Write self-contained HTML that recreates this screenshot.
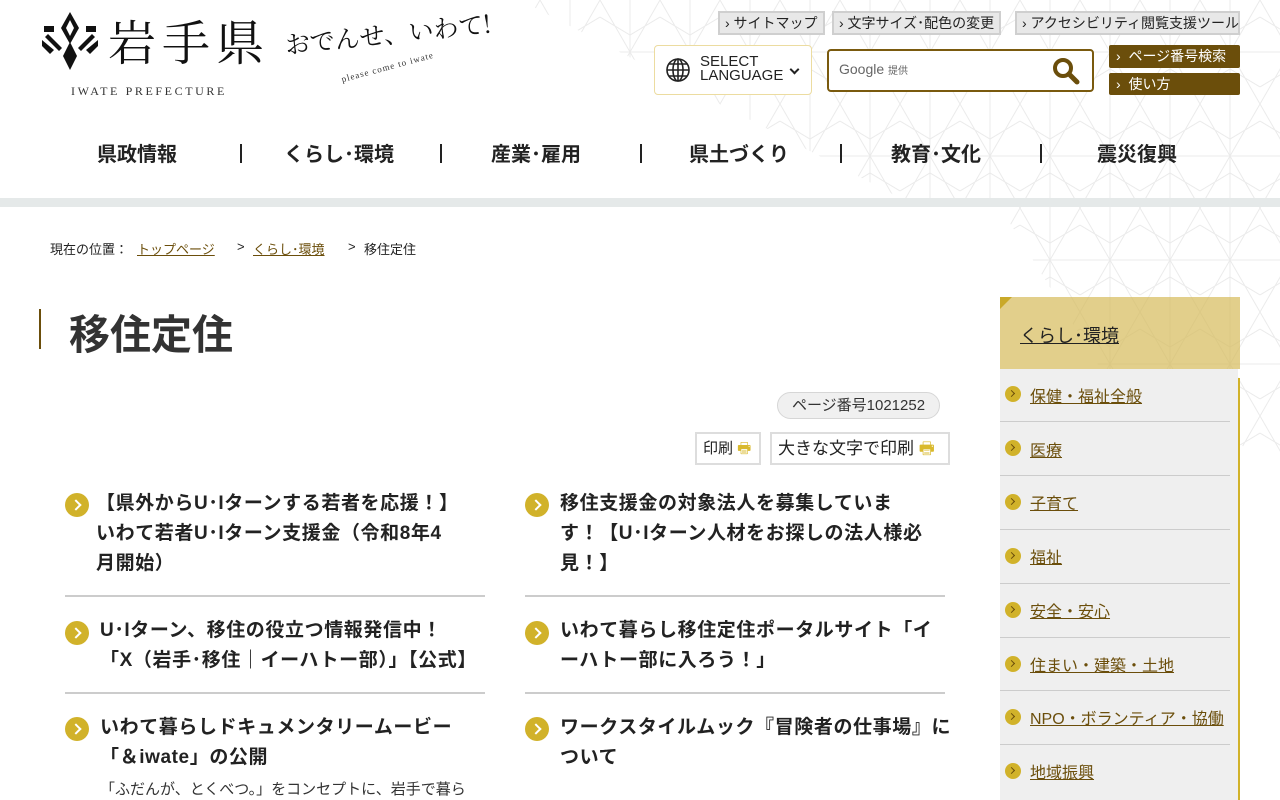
<!DOCTYPE html>
<html lang="ja"><head><meta charset="utf-8"><style>
*{margin:0;padding:0;box-sizing:border-box}
body{width:1280px;height:800px;overflow:hidden;background:#fff;font-family:"Liberation Sans","Noto Sans CJK JP",sans-serif;color:#222;position:relative}
.abs{position:absolute}
.tl{position:absolute;top:11px;height:24px;background:#e8e8e8;border:2px solid #cfcfcf;font-size:14px;line-height:20px;padding:0 5px;color:#222;white-space:nowrap}
.nav{position:absolute;top:138px;font-size:20px;font-weight:bold;color:#222}
.sep{position:absolute;top:144px;width:2px;height:19px;background:#222}
.item{position:absolute;font-size:19px;font-weight:bold;line-height:30px;color:#222;white-space:nowrap;letter-spacing:.6px}
.ic{position:absolute;width:24px;height:24px;border-radius:50%;background:#d1b22a}
.ic::after{content:"";position:absolute;left:7px;top:8px;width:6px;height:6px;border-right:2px solid #fff;border-top:2px solid #fff;transform:rotate(45deg)}
.hr{position:absolute;height:2px;background:#ccc}
.side{position:absolute;left:1000px;width:230px;font-size:16px;color:#6b4e0b;text-decoration:underline}
.sic{position:absolute;left:1005px;width:16px;height:16px;border-radius:50%;background:#d1b22a}
.sic::after{content:"";position:absolute;left:4px;top:5px;width:4px;height:4px;border-right:1.5px solid #6b4e0b;border-top:1.5px solid #6b4e0b;transform:rotate(45deg)}
.shr{position:absolute;left:1000px;width:230px;height:1px;background:#ccc}
.bc{position:absolute;top:239px;font-size:13px;color:#222;white-space:nowrap}
.bc a{color:#6b4e0b;text-decoration:underline}
</style></head><body>
<svg class="abs" style="left:0;top:0" width="1280" height="800"><defs><pattern id="p" width="60" height="104" patternUnits="userSpaceOnUse"><g stroke="#ebebeb" stroke-width="1" fill="none"><path d="M0 0L60 104M60 0L0 104M30 0V104M0 52H60M0 0L30 52L60 0M0 104L30 52L60 104M0 17L30 35L60 17M0 87L30 69L60 87"/></g></pattern></defs>
<polygon points="520,0 1280,0 1280,198 900,198" fill="url(#p)"/>
<polygon points="1000,207 1280,207 1280,460 1120,400" fill="url(#p)"/>
</svg>
<svg class="abs" style="left:42px;top:12px" width="56" height="58" viewBox="0 0 56 58"><g fill="#111"><path d="M28 0L37 16L28 32L19 16Z M28 8L32 16L28 24L24 16Z" fill-rule="evenodd"/><path d="M28 30L35 44L28 58L21 44Z"/><path d="M2 14h10v6H2zM44 14h10v6H44z"/><path d="M0 28l12 10-4 4L0 34zM56 28L44 38l4 4 8-8z"/><path d="M6 22l14 14-3 3L3 25zM50 22L36 36l3 3 14-14z"/></g></svg>
<div class="abs" style="left:108px;top:10px;font-family:'Noto Serif CJK SC',serif;font-size:48px;line-height:60px;letter-spacing:6px;color:#111">岩手県</div>
<div class="abs" style="left:71px;top:84px;font-family:'Liberation Serif',serif;font-size:12px;letter-spacing:2.6px;color:#333">IWATE PREFECTURE</div>
<div class="abs" style="left:287px;top:26px;font-family:'Noto Serif CJK SC',serif;font-size:25px;color:#111;transform:rotate(-6deg);transform-origin:left bottom;white-space:nowrap">おでんせ、いわて!</div>
<div class="abs" style="left:340px;top:62px;font-family:'Liberation Serif',serif;font-size:9px;color:#333;transform:rotate(-15deg);letter-spacing:1px">please come to iwate</div>
<div class="tl" style="left:718px">› サイトマップ</div>
<div class="tl" style="left:832px">› 文字サイズ･配色の変更</div>
<div class="tl" style="left:1015px;width:225px">› アクセシビリティ閲覧支援ツール</div>
<div class="abs" style="left:654px;top:45px;width:158px;height:50px;background:#fff;border:1px solid #ecdca0;border-radius:4px"></div>
<svg class="abs" style="left:665px;top:57px" width="26" height="26" viewBox="0 0 26 26" fill="none" stroke="#222" stroke-width="1.6"><circle cx="13" cy="13" r="11"/><ellipse cx="13" cy="13" rx="5" ry="11"/><path d="M2 13h22M13 2v22M4 7h18M4 19h18"/></svg>
<div class="abs" style="left:700px;top:55px;font-size:15px;line-height:14px;color:#222">SELECT<br>LANGUAGE</div>
<div class="abs" style="left:791px;top:66px;width:7px;height:7px;border-right:2px solid #222;border-bottom:2px solid #222;transform:rotate(45deg)"></div>
<div class="abs" style="left:827px;top:49px;width:267px;height:43px;background:#fff;border:2px solid #7a5a0e;border-radius:4px"></div>
<div class="abs" style="left:839px;top:61px;font-size:14px;color:#666">Google <span style="font-size:10px">提供</span></div>
<svg class="abs" style="left:1052px;top:57px" width="28" height="28" viewBox="0 0 28 28"><circle cx="11" cy="11" r="8" fill="none" stroke="#6b4e0b" stroke-width="4"/><path d="M17 17l8 8" stroke="#6b4e0b" stroke-width="5" stroke-linecap="round"/></svg>
<div class="abs" style="left:1109px;top:45px;width:131px;height:23px;background:#6b4e0b;border-radius:2px;color:#fff;font-size:14px;line-height:23px;padding-left:7px">›&nbsp; ページ番号検索</div>
<div class="abs" style="left:1109px;top:73px;width:131px;height:22px;background:#6b4e0b;border-radius:2px;color:#fff;font-size:14px;line-height:22px;padding-left:7px">›&nbsp; 使い方</div>
<div class="nav" style="left:97px">県政情報</div><div class="sep" style="left:240px"></div>
<div class="nav" style="left:284px">くらし･環境</div><div class="sep" style="left:440px"></div>
<div class="nav" style="left:491px">産業･雇用</div><div class="sep" style="left:640px"></div>
<div class="nav" style="left:689px">県土づくり</div><div class="sep" style="left:840px"></div>
<div class="nav" style="left:891px">教育･文化</div><div class="sep" style="left:1040px"></div>
<div class="nav" style="left:1097px">震災復興</div>
<div class="abs" style="left:0;top:198px;width:1280px;height:9px;background:#e5e9e9"></div>
<div class="bc" style="left:50px">現在の位置：</div>
<div class="bc" style="left:137px"><a>トップページ</a></div>
<div class="bc" style="left:237px">&gt;</div>
<div class="bc" style="left:253px"><a>くらし･環境</a></div>
<div class="bc" style="left:348px">&gt;</div>
<div class="bc" style="left:364px">移住定住</div>
<div class="abs" style="left:39px;top:309px;width:2px;height:40px;background:#6b4e0b"></div>
<div class="abs" style="left:69px;top:301px;font-size:41px;font-weight:bold;color:#333">移住定住</div>
<div class="abs" style="left:777px;top:392px;width:163px;height:27px;border:1px solid #d6d6d6;background:#f0f0f0;border-radius:14px;font-size:15px;line-height:25px;text-align:center;color:#333">ページ番号1021252</div>
<div class="abs" style="left:695px;top:432px;width:66px;height:33px;border:2px solid #ddd;font-size:15px;line-height:29px;padding-left:6px">印刷 <span style="color:#d9b92d">🖶</span></div>
<div class="abs" style="left:770px;top:432px;width:180px;height:33px;border:2px solid #ddd;font-size:17px;line-height:29px;padding-left:6px">大きな文字で印刷 <span style="color:#d9b92d">🖶</span></div>
<div class="ic" style="left:65px;top:493px"></div>
<div class="item" style="left:96px;top:489px">【県外からU･Iターンする若者を応援！】<br>いわて若者U･Iターン支援金（令和8年4<br>月開始）</div>
<div class="hr" style="left:65px;top:595px;width:420px"></div>
<div class="ic" style="left:525px;top:493px"></div>
<div class="item" style="left:560px;top:489px">移住支援金の対象法人を募集していま<br>す！【U･Iターン人材をお探しの法人様必<br>見！】</div>
<div class="hr" style="left:525px;top:595px;width:420px"></div>
<div class="ic" style="left:65px;top:621px"></div>
<div class="item" style="left:100px;top:616px">U･Iターン、移住の役立つ情報発信中！<br>「X（岩手･移住｜イーハトー部）」【公式】</div>
<div class="hr" style="left:65px;top:692px;width:420px"></div>
<div class="ic" style="left:525px;top:621px"></div>
<div class="item" style="left:560px;top:616px">いわて暮らし移住定住ポータルサイト「イ<br>ーハトー部に入ろう！」</div>
<div class="hr" style="left:525px;top:692px;width:420px"></div>
<div class="ic" style="left:65px;top:717px"></div>
<div class="item" style="left:100px;top:713px">いわて暮らしドキュメンタリームービー<br>「＆iwate」の公開</div>
<div class="abs" style="left:100px;top:778px;font-size:15px;color:#333">「ふだんが、とくべつ。」をコンセプトに、岩手で暮ら</div>
<div class="ic" style="left:525px;top:717px"></div>
<div class="item" style="left:560px;top:713px">ワークスタイルムック『冒険者の仕事場』に<br>ついて</div>
<div class="abs" style="left:1000px;top:297px;width:240px;height:72px;background:rgba(214,186,90,.7)"></div>
<div class="abs" style="left:1000px;top:297px;width:0;height:0;border-top:12px solid #c9a92a;border-right:12px solid transparent"></div>
<div class="abs" style="left:1020px;top:322px;font-size:18px;color:#222;text-decoration:underline">くらし･環境</div>
<div class="abs" style="left:1000px;top:369px;width:238px;height:431px;background:#efefef"></div>
<div class="abs" style="left:1238px;top:378px;width:2px;height:422px;background:#d1b22a"></div>
<div class="sic" style="top:386px"></div><div class="side" style="left:1030px;top:383px">保健・福祉全般</div><div class="shr" style="top:421px"></div>
<div class="sic" style="top:440px"></div><div class="side" style="left:1030px;top:437px">医療</div><div class="shr" style="top:475px"></div>
<div class="sic" style="top:494px"></div><div class="side" style="left:1030px;top:490px">子育て</div><div class="shr" style="top:529px"></div>
<div class="sic" style="top:548px"></div><div class="side" style="left:1030px;top:544px">福祉</div><div class="shr" style="top:583px"></div>
<div class="sic" style="top:602px"></div><div class="side" style="left:1030px;top:598px">安全・安心</div><div class="shr" style="top:637px"></div>
<div class="sic" style="top:656px"></div><div class="side" style="left:1030px;top:652px">住まい・建築・土地</div><div class="shr" style="top:690px"></div>
<div class="sic" style="top:709px"></div><div class="side" style="left:1030px;top:705px">NPO・ボランティア・協働</div><div class="shr" style="top:744px"></div>
<div class="sic" style="top:763px"></div><div class="side" style="left:1030px;top:759px">地域振興</div>
</body></html>
